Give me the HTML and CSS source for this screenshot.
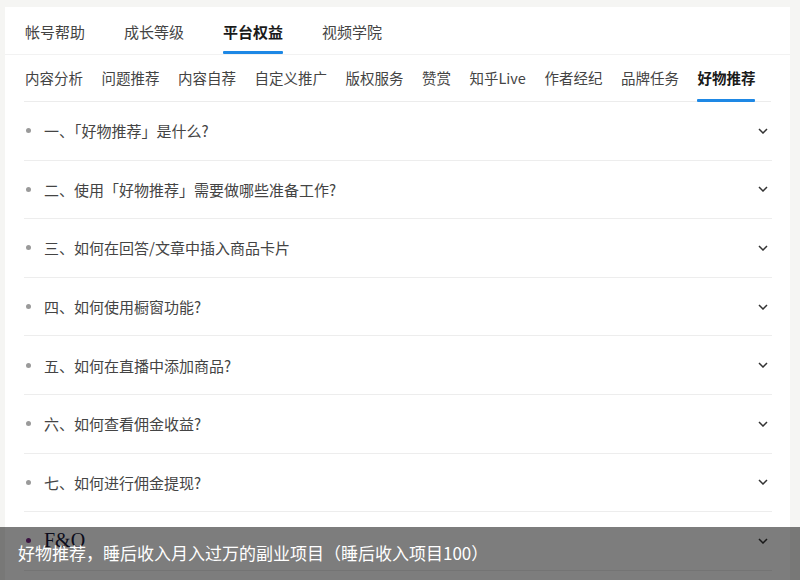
FILE: index.html
```html
<!DOCTYPE html>
<html lang="zh">
<head>
<meta charset="utf-8">
<link rel="stylesheet" href="styles.css">
</head>
<body>
<div class="card">
  <nav class="tabs">
    <span class="tab">帐号帮助</span>
    <span class="tab">成长等级</span>
    <span class="tab active">平台权益</span>
    <span class="tab">视频学院</span>
  </nav>
  <nav class="subtabs">
    <span class="sub">内容分析</span>
    <span class="sub">问题推荐</span>
    <span class="sub">内容自荐</span>
    <span class="sub">自定义推广</span>
    <span class="sub">版权服务</span>
    <span class="sub">赞赏</span>
    <span class="sub">知乎Live</span>
    <span class="sub">作者经纪</span>
    <span class="sub">品牌任务</span>
    <span class="sub active">好物推荐</span>
  </nav>
  <ul class="list">
    <li class="item"><span class="dot"></span><span class="q">一、「好物推荐」是什么?</span><svg class="chev" viewBox="0 0 10 6"><path d="M1 1l4 4 4-4"/></svg></li>
    <li class="item"><span class="dot"></span><span class="q">二、使用「好物推荐」需要做哪些准备工作?</span><svg class="chev" viewBox="0 0 10 6"><path d="M1 1l4 4 4-4"/></svg></li>
    <li class="item"><span class="dot"></span><span class="q">三、如何在回答/文章中插入商品卡片</span><svg class="chev" viewBox="0 0 10 6"><path d="M1 1l4 4 4-4"/></svg></li>
    <li class="item"><span class="dot"></span><span class="q">四、如何使用橱窗功能?</span><svg class="chev" viewBox="0 0 10 6"><path d="M1 1l4 4 4-4"/></svg></li>
    <li class="item"><span class="dot"></span><span class="q">五、如何在直播中添加商品?</span><svg class="chev" viewBox="0 0 10 6"><path d="M1 1l4 4 4-4"/></svg></li>
    <li class="item"><span class="dot"></span><span class="q">六、如何查看佣金收益?</span><svg class="chev" viewBox="0 0 10 6"><path d="M1 1l4 4 4-4"/></svg></li>
    <li class="item"><span class="dot"></span><span class="q">七、如何进行佣金提现?</span><svg class="chev" viewBox="0 0 10 6"><path d="M1 1l4 4 4-4"/></svg></li>
    <li class="item last"><span class="dot purple"></span><span class="q faq">F&amp;O</span><svg class="chev" viewBox="0 0 10 6"><path d="M1 1l4 4 4-4"/></svg></li>
  </ul>
</div>
<div class="caption">好物推荐，睡后收入月入过万的副业项目（睡后收入项目100）</div>
</body>
</html>
```
FILE: styles.css
```css
html, body {
  margin: 0;
  padding: 0;
  height: 580px;
  overflow: hidden;
}
body {
  background: #f5f5f3;
  font-family: "Noto Sans CJK SC", "Noto Sans", sans-serif;
  color: #444;
  position: relative;
}
.card {
  background: #fff;
  margin: 7px 10px 0 5px;
  height: 600px;
}
.tabs {
  display: flex;
  gap: 39px;
  padding: 0 20px;
  height: 47px;
  border-bottom: 1px solid #f2f2f2;
}
.tab {
  font-size: 15px;
  line-height: 47px;
  padding-top: 1px;
  color: #444;
  position: relative;
}
.tab.active {
  font-weight: bold;
  color: #1a1a1a;
}
.tab.active::after {
  content: "";
  position: absolute;
  left: 0;
  right: 0;
  bottom: 0;
  height: 3px;
  background: #1e88e5;
  border-radius: 1px;
}
.subtabs {
  display: flex;
  gap: 18.5px;
  margin: 0 19px 0 19px;
  padding-left: 1px;
  height: 46px;
  border-bottom: 1px solid #ececec;
}
.sub {
  font-size: 14.5px;
  line-height: 46px;
  white-space: nowrap;
  position: relative;
  color: #444;
}
.sub.active {
  font-weight: bold;
  color: #1a1a1a;
}
.sub.active::after {
  content: "";
  position: absolute;
  left: 0;
  right: 0;
  bottom: -1px;
  height: 3px;
  background: #1e88e5;
  border-radius: 1px;
}
.list {
  list-style: none;
  margin: 0 18px 0 19px;
  padding: 0;
}
.item {
  display: flex;
  align-items: center;
  height: 57.6px;
  border-bottom: 1px solid #ededed;
  padding-left: 1px;
}
.dot {
  width: 5px;
  height: 5px;
  border-radius: 50%;
  background: #9a9a9a;
  margin: 0 13px 0 1px;
}
.dot.purple {
  background: #7a2a86;
}
.q {
  flex: 1;
  font-size: 15px;
  color: #444;
}
.q.faq {
  font-family: "Liberation Serif", serif;
  font-size: 20px;
  color: #1a1a3a;
}
.chev {
  width: 10px;
  height: 6px;
  margin-right: 4px;
  fill: none;
  stroke: #333;
  stroke-width: 1.5;
}
.caption {
  position: absolute;
  left: 0;
  right: 0;
  top: 527px;
  height: 53px;
  background: rgba(0, 0, 0, 0.51);
  color: #fff;
  font-size: 17px;
  line-height: 52px;
  padding-left: 18px;
  box-sizing: border-box;
}
```
